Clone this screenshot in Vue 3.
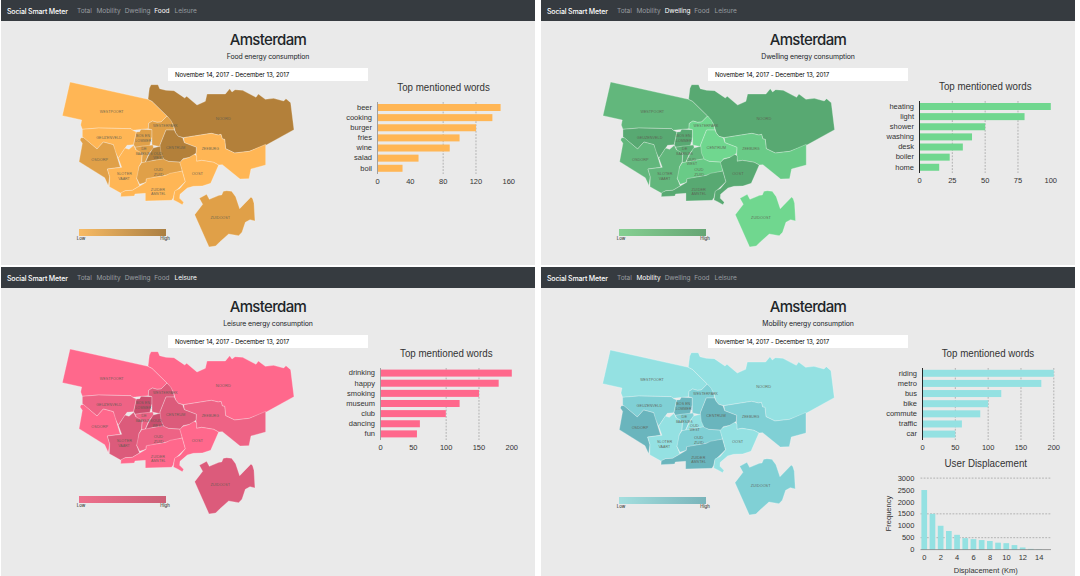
<script setup>
const navItems = ['Total', 'Mobility', 'Dwelling', 'Food', 'Leisure']

// District outlines share one map coordinate system.
const districts = [
  { id: 'westpoort', d: '45,36 279,88 291,94 336,138 318,156 306,157 292,153 281,160 280,176 233,181 228,176 130,174 82,178 77,165 80,150 22,137', labels: [['WESTPOORT', 170, 124, 71]] },
  { id: 'noord', d: '288,44 309,44 314,56 333,61 357,62 389,84 395,79 426,105 451,94 456,72 511,72 524,56 531,66 540,59 563,61 603,82 610,72 631,88 656,85 686,93 693,86 707,98 717,179 634,225 583,244 539,249 512,236 509,208 502,207 498,193 490,195 469,190 386,203 370,199 362,189 355,165 336,138 291,94 279,88 283,55', labels: [['NOORD', 505, 146, 45]] },
  { id: 'zeeburg', d: '386,203 469,190 490,195 498,193 502,207 509,208 512,236 539,249 583,244 632,223 632,285 588,297 582,326 555,327 502,284 491,285 476,277 440,271 425,274 423,250 424,232 388,218', labels: [['ZEEBURG', 466, 236, 52]] },
  { id: 'geuzenveld', d: '82,178 130,174 228,176 233,181 244,186 236,224 216,226 190,265 178,240 175,224 145,216 126,237 82,201', labels: [['GEUZENVELD', 162, 202, 77]] },
  { id: 'bos', d: '244,186 254,185 258,178 291,179 291,200 284,228 240,232 236,224', labels: [['BOS EN', 264, 196, 42], ['LOMMER', 265, 211, 48]] },
  { id: 'westerpark', d: '281,160 292,153 306,157 318,156 336,138 347,150 355,165 358,180 333,180 315,225 316,230 291,225 291,179 280,176', labels: [['WESTERPARK', 331, 167, 74]] },
  { id: 'osdorp', d: '78,203 86,203 126,237 145,216 175,224 184,252 196,292 157,297 164,320 160,347 149,323 72,275 82,220 75,210', labels: [['OSDORP', 134, 269, 50]] },
  { id: 'slotervaart', d: '190,265 210,234 222,238 236,226 243,240 262,240 260,275 252,290 250,315 245,325 254,348 232,361 211,362 198,370 163,350 164,320 157,297 200,292', labels: [['SLOTER', 208, 311, 46], ['VAART', 207, 325, 35]] },
  { id: 'baarsjes', d: '240,232 262,228 294,225 296,235 282,250 270,278 260,278 262,250 244,240', labels: [['DE', 267, 236, 17], ['BAARSJES', 267, 250, 50]] },
  { id: 'oudwest', d: '294,234 318,228 326,268 292,272 270,280 280,258', labels: [['OUD', 309, 249, 27], ['WEST', 310, 263, 31]] },
  { id: 'oudzuid', d: '260,278 292,272 326,266 341,274 376,276 382,303 333,316 274,328 273,337 254,343 245,325 252,290', labels: [['OUD', 310, 298, 28], ['ZUID', 311, 312, 30]] },
  { id: 'zuideramstel', d: '382,303 391,335 359,366 355,383 350,391 271,393 271,370 240,372 238,378 197,380 198,368 211,362 232,361 254,348 273,337 274,326 333,316 345,310', labels: [['ZUIDER', 309, 357, 43], ['AMSTEL', 310, 371, 44]] },
  { id: 'oost', d: '403,262 414,250 425,258 425,274 440,271 476,277 491,285 467,340 442,348 415,349 397,354 375,373 374,385 386,397 382,404 366,395 355,390 359,363 375,355 391,335 382,303 374,276 384,268', labels: [['OOST', 427, 309, 34]] },
  { id: 'centrum', d: '333,180 358,180 362,189 370,199 383,203 388,218 424,232 423,250 403,262 384,266 376,276 341,274 326,268 318,250 315,225', labels: [['CENTRUM', 362, 233, 58]] },
  { id: 'zuidoost', d: '433,385 455,373 463,388 492,376 500,375 505,364 515,362 530,364 542,380 554,416 588,381 593,386 597,400 600,453 585,449 571,457 561,487 551,497 521,492 495,515 482,528 462,531 419,434 443,403', labels: [['ZUIDOOST', 496, 443, 59]] }
]

const panels = [
  {
    name: 'Food', shift: 0,
    shades: ['#ffb655', '#f8b050', '#e0a048', '#c68e40', '#b3803a'],
    legend: ['#f8bb64', '#aa7f43'],
    levels: { noord: 4, centrum: 4, oudwest: 4, osdorp: 2, bos: 2, westerpark: 2, baarsjes: 2, oudzuid: 2, zuidoost: 2 },
    moved: [0, 0],
    chart: { x: 377.5, top: 102, bar: 104, max: 160, step: 40, grid: [80, 120], title: 443.6, titleY: 91, axis: '#999', words: [['beer', 150], ['cooking', 140], ['burger', 120], ['fries', 100], ['wine', 88], ['salad', 50], ['boil', 30.5]] }
  },
  {
    name: 'Dwelling', shift: 0.6,
    shades: ['#70d78f', '#69cb87', '#62b77c', '#5cb076', '#58a972'],
    legend: ['#85d092', '#66a574'],
    levels: { westpoort: 2, noord: 4, zeeburg: 1, geuzenveld: 4, bos: 4, osdorp: 2, slotervaart: 2, baarsjes: 3, oudwest: 2, oudzuid: 1, zuideramstel: 4, oost: 4 },
    moved: [-21, 18],
    chart: { x: 379.5, top: 101, bar: 103, max: 100, step: 25, grid: [25, 50, 75], title: 445.3, titleY: 90, axis: '#111', words: [['heating', 100], ['light', 80], ['shower', 50], ['washing', 40], ['desk', 33], ['boiler', 23], ['home', 15]] }
  },
  {
    name: 'Leisure', shift: 0,
    shades: ['#ff688c', '#ee6385', '#dc5b7b', '#d25273', '#c94e6e'],
    legend: ['#ee6f8c', '#cc6077'],
    levels: { zeeburg: 1, geuzenveld: 1, bos: 4, westerpark: 2, slotervaart: 2, baarsjes: 1, oudwest: 4, oudzuid: 1, centrum: 2, zuidoost: 2 },
    moved: [-2, 2],
    chart: { x: 380.5, top: 101, bar: 102.6, max: 200, step: 50, grid: [100, 150], title: 446.3, titleY: 90, axis: '#999', words: [['drinking', 200], ['happy', 180], ['smoking', 150], ['museum', 120.5], ['club', 99.5], ['dancing', 60], ['fun', 55.5]] }
  },
  {
    name: 'Mobility', shift: 0.3,
    shades: ['#94e1e2', '#8adade', '#80d0d5', '#75c2c9', '#6ab5bd'],
    legend: ['#a4dfdf', '#79b4ba'],
    levels: { zeeburg: 2, geuzenveld: 2, bos: 4, westerpark: 2, osdorp: 4, baarsjes: 2, oudzuid: 2, zuideramstel: 4, centrum: 4, zuidoost: 2 },
    moved: [-12, 12],
    chart: { x: 382.5, top: 101, bar: 102.8, max: 200, step: 50, grid: [50, 100, 150, 200], title: 448, titleY: 90, axis: '#111', words: [['riding', 200], ['metro', 181], ['bus', 120], ['bike', 100], ['commute', 88], ['traffic', 60], ['car', 50]] },
    histogram: [2500, 1500, 1000, 780, 620, 480, 440, 400, 360, 290, 270, 190, 90, 30, 15]
  }
]

const ticks = (c) => [0, 1, 2, 3, 4].map((n) => n * c.step)
const scale = (c, v) => (v / c.max) * 131.3
const freqY = (v) => 282.6 - v * 0.02383
const labelX = (p, id, x) => x + (id === 'oudwest' ? p.moved[0] : 0)
const labelY = (p, id, y) => y + (id === 'oudwest' ? p.moved[1] : 0)
</script>

<template>
  <main class="board">
    <section v-for="p in panels" :key="p.name" class="panel">
      <nav class="nav">
        <span class="brand">Social Smart Meter</span>
        <span v-for="n in navItems" :key="n" class="link" :class="[n.toLowerCase(), { active: n === p.name }]">{{ n }}</span>
      </nav>
      <h1>Amsterdam</h1>
      <p class="subtitle">{{ p.name }} energy consumption</p>
      <div class="dates">November 14, 2017 - December 13, 2017</div>
      <div class="content">
        <svg class="map" :class="p.name.toLowerCase()" width="234" height="168" viewBox="18 33 702 504">
          <defs>
            <linearGradient :id="'scale-' + p.name">
              <stop offset="0" :stop-color="p.legend[0]" />
              <stop offset="1" :stop-color="p.legend[1]" />
            </linearGradient>
          </defs>
          <g :transform="`translate(${p.shift * 3} 0)`">
            <polygon v-for="d in districts" :key="d.id" :points="d.d" :fill="p.shades[p.levels[d.id] || 0]" class="district" />
            <g v-for="d in districts" :key="d.id">
              <text v-for="l in d.labels" :key="l[0]" :x="labelX(p, d.id, l[1])" :y="labelY(p, d.id, l[2]) + 5" :textLength="l[3]" lengthAdjust="spacingAndGlyphs" class="place">{{ l[0] }}</text>
            </g>
          </g>
          <rect x="72" y="477" width="261" height="21" :fill="`url(#scale-${p.name})`" />
          <text x="78" y="511" class="legend">Low</text>
          <text x="330" y="511" class="legend">High</text>
        </svg>
        <svg class="charts" width="195" :height="p.histogram ? 228 : 120" :viewBox="`340 81 195 ${p.histogram ? 228 : 120}`">
          <text :x="p.chart.title" :y="p.chart.titleY" textLength="92.5" lengthAdjust="spacingAndGlyphs" class="title">Top mentioned words</text>
          <line v-for="g in p.chart.grid" :key="g" :x1="p.chart.x + scale(p.chart, g)" :x2="p.chart.x + scale(p.chart, g)" :y1="p.chart.top" :y2="p.chart.top + 72" class="grid" />
          <g v-for="(w, i) in p.chart.words" :key="w[0]">
            <rect :x="p.chart.x" :y="p.chart.bar + i * 10.13" :width="scale(p.chart, w[1])" height="7" :fill="p.shades[0]" />
            <text :x="p.chart.x - 5.5" :y="p.chart.bar + 5.8 + i * 10.13" class="word">{{ w[0] }}</text>
          </g>
          <line :x1="p.chart.x" :x2="p.chart.x" :y1="p.chart.top" :y2="p.chart.top + 72" :stroke="p.chart.axis" stroke-width=".9" />
          <text v-for="t in ticks(p.chart)" :key="t" :x="p.chart.x + scale(p.chart, t)" :y="p.chart.top + 82" class="tick">{{ t }}</text>
          <g v-if="p.histogram">
            <text x="445.8" y="200" textLength="82.5" lengthAdjust="spacingAndGlyphs" class="title">User Displacement</text>
            <line v-for="v in [500, 1500, 3000]" :key="v" x1="380.5" x2="511" :y1="freqY(v)" :y2="freqY(v)" class="grid" />
            <text v-for="n in 7" :key="n" x="374.4" :y="freqY((n - 1) * 500) + 2.6" class="word">{{ (n - 1) * 500 }}</text>
            <rect v-for="(v, i) in p.histogram" :key="i" :x="381.4 + i * 8.2" :y="freqY(v)" width="5.7" :height="v * 0.02383" :fill="p.shades[0]" />
            <line x1="380.5" x2="511" y1="282.6" y2="282.6" stroke="#777" stroke-width=".7" />
            <text v-for="n in 8" :key="n" :x="384.4 + (n - 1) * 16.4" y="292.6" class="tick">{{ (n - 1) * 2 }}</text>
            <text x="445.7" y="306.4" textLength="64" class="tick">Displacement (Km)</text>
            <text x="0" y="0" transform="translate(351.3 246.5) rotate(-90)" textLength="35.5" class="tick">Frequency</text>
          </g>
        </svg>
      </div>
    </section>
  </main>
</template>

<style>
body { background: #fff; }
</style>

<style scoped>
.board {
  box-sizing: border-box;
  display: grid;
  grid-template-columns: 534px 534px;
  grid-template-rows: 265px 309px;
  gap: 2px 6px;
  width: 1080px;
  height: 576px;
  padding-left: 1px;
  overflow: hidden;
  font-family: Inter, "Liberation Sans", sans-serif;
}
.panel {
  background: #eaeaea;
  overflow: hidden;
  color: #212529;
}
.nav {
  box-sizing: border-box;
  display: flex;
  align-items: center;
  height: 21px;
  padding: 2px 6px 0;
  background: #363b40;
  color: #9a9da0;
  font-size: 6.5px;
  line-height: 19px;
  white-space: nowrap;
}
.brand { width: 70px; color: #fff; font-size: 7px; font-weight: 500; letter-spacing: -0.16px; }
.link { width: 28px; letter-spacing: -0.05px; }
.link.total { width: 19.5px; }
.link.mobility { width: 28.2px; }
.link.dwelling { width: 29.6px; }
.link.food { width: 20.3px; }
.link.active { color: #fff; }
h1 {
  height: 20px;
  margin: 9px 0 0;
  font-size: 15px;
  font-weight: 500;
  letter-spacing: -0.65px;
  line-height: 20px;
  text-align: center;
}
.subtitle {
  height: 12px;
  margin: 1px 0 5px;
  font-size: 6.9px;
  letter-spacing: -0.12px;
  line-height: 12px;
  text-align: center;
}
.dates {
  box-sizing: border-box;
  width: 200px;
  height: 13px;
  margin: 0 auto;
  padding-left: 7px;
  background: #fff;
  color: #000;
  font-size: 6.1px;
  letter-spacing: -0.04px;
  line-height: 13px;
}
.content {
  display: flex;
  align-items: flex-start;
}
.map { display: block; flex: none; margin-left: 60px; }
.map.mobility { margin-top: 0.7px; }
.charts { display: block; flex: none; margin-left: 45px; }
.district { stroke: rgba(255, 255, 255, 0.5); stroke-width: 1.6; stroke-linejoin: round; }
.place { fill: #5c5c50; fill-opacity: 0.9; font-family: "Liberation Sans", Arial, sans-serif; font-size: 12.5px; text-anchor: middle; }
.legend { fill: #111; font-size: 13px; text-anchor: middle; }
.charts text { fill: #333; font-family: "Liberation Sans", Arial, sans-serif; }
.charts .title { font-size: 10.3px; text-anchor: middle; }
.charts .word { font-size: 7.5px; text-anchor: end; }
.charts .tick { font-size: 7.5px; text-anchor: middle; }
.grid { stroke: #999; stroke-width: 0.7; stroke-dasharray: 1.8 1.4; }
</style>
